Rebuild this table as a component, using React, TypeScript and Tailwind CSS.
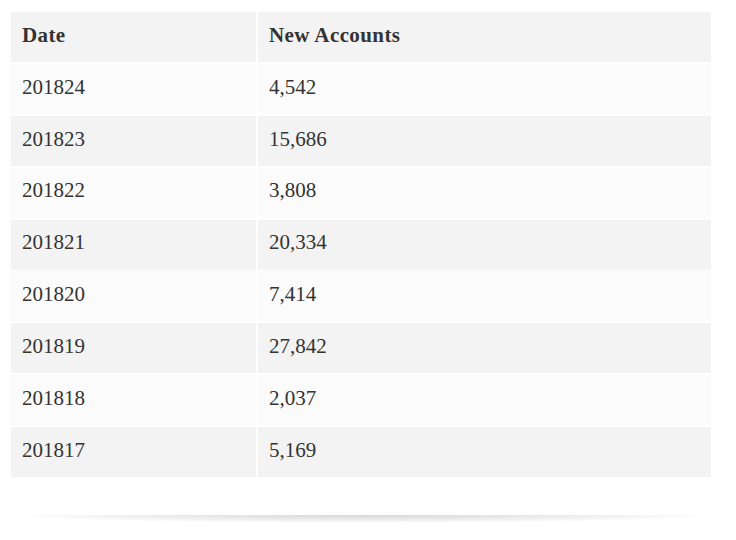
const rows: [string, string][] = [
  ['201824', '4,542'],
  ['201823', '15,686'],
  ['201822', '3,808'],
  ['201821', '20,334'],
  ['201820', '7,414'],
  ['201819', '27,842'],
  ['201818', '2,037'],
  ['201817', '5,169'],
];

export default function App() {
  return (
    <div className="min-h-[540px] w-[736px] bg-white pl-[11px] pt-[12px] font-['Liberation_Serif',serif] text-[#333333]">
      <div className="grid w-[700px] grid-cols-[245px_453px] gap-x-[2px] gap-y-[1.875px]">
        <div className="flex h-[50px] items-center bg-[#f3f3f3] pb-[3px] pl-[11px] text-[21px] font-bold tracking-[0.4px]">
          Date
        </div>
        <div className="flex h-[50px] items-center bg-[#f3f3f3] pb-[3px] pl-[11px] text-[21px] font-bold tracking-[0.4px]">
          New Accounts
        </div>
        {rows.map(([date, count], i) => {
          const bg = i % 2 === 0 ? 'bg-[#fbfbfb]' : 'bg-[#f3f3f3]';
          return [
            <div key={date + 'd'} className={`flex h-[50px] items-center pb-[3px] pl-[11px] text-[21px] ${bg}`}>
              {date}
            </div>,
            <div key={date + 'c'} className={`flex h-[50px] items-center pb-[3px] pl-[11px] text-[21px] ${bg}`}>
              {count}
            </div>,
          ];
        })}
      </div>
      {/* soft shadow line under the card */}
      <div className="ml-[-6px] mt-[38px] h-[8px] w-[716px] bg-[radial-gradient(ellipse_50%_100%_at_50%_0%,rgba(0,0,0,0.16),rgba(0,0,0,0.07)_60%,transparent_100%)]" />
    </div>
  );
}
